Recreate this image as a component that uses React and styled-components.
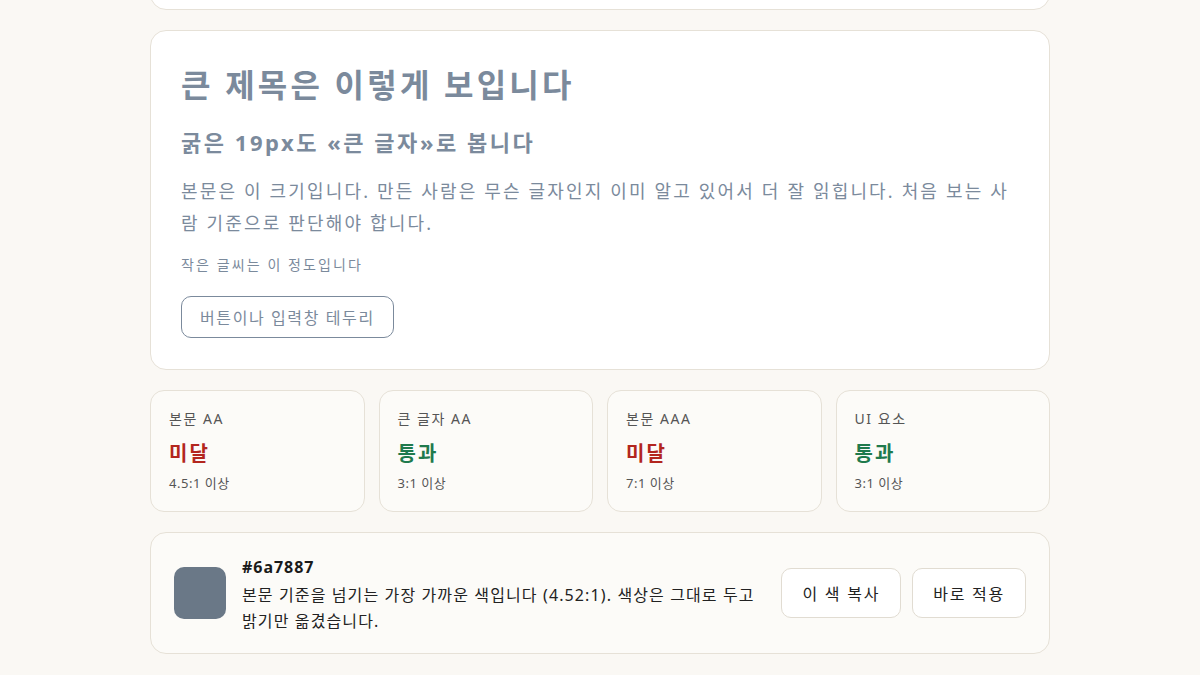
import React from 'react';
import styled, { createGlobalStyle } from 'styled-components';

const GlobalStyle = createGlobalStyle`
  html, body {
    margin: 0;
    padding: 0;
    background: #faf8f4;
    font-family: "Noto Sans", "Noto Sans CJK KR", sans-serif;
    overflow: hidden;
  }
  * { box-sizing: border-box; }
`;

const Page = styled.div`
  width: 900px;
  margin: -50px auto 0;
  display: flex;
  flex-direction: column;
  gap: 20px;
`;

const Card = styled.section`
  background: ${({ bg }) => bg || '#fff'};
  border: 1px solid #e6e1d7;
  border-radius: 16px;
`;

const TopCard = styled(Card)`
  height: 60px;
`;

const Preview = styled(Card)`
  padding: 30px 30px 31px;
  color: #7b8a9c;
`;

const Title = styled.h1`
  margin: 0;
  font-size: 32px;
  line-height: 48px;
  font-weight: 700;
  letter-spacing: 0.1em;
`;

const Subtitle = styled.h2`
  margin: 18px 0 0;
  font-size: 22px;
  line-height: 1.4;
  font-weight: 700;
  letter-spacing: 0.115em;
`;

const Body = styled.p`
  margin: 17px 0 0;
  font-size: 18px;
  line-height: 1.8;
  letter-spacing: 0.12em;
`;

const Small = styled.p`
  margin: 14px 0 0;
  font-size: 14px;
  line-height: 1.5;
  letter-spacing: 0.15em;
`;

const OutlineButton = styled.button`
  margin-top: 21px;
  height: 42px;
  padding: 0 18px;
  border: 1.5px solid #7b8a9c;
  border-radius: 10px;
  background: transparent;
  color: #7b8a9c;
  font: inherit;
  font-size: 16px;
  letter-spacing: 0.1em;
`;

const StatGrid = styled.div`
  display: grid;
  grid-template-columns: repeat(4, 1fr);
  gap: 14px;
`;

const Stat = styled(Card)`
  padding: 18px 18px 19px;
  border-radius: 14px;
`;

const StatLabel = styled.div`
  font-size: 14px;
  line-height: 1.4;
  color: #555;
  letter-spacing: 0.11em;
`;

const StatValue = styled.div`
  margin-top: 12px;
  font-size: 20px;
  line-height: 1.4;
  font-weight: 700;
  letter-spacing: 0.1em;
  color: ${({ pass }) => (pass ? '#1f7a4d' : '#b3261e')};
`;

const StatNote = styled.div`
  margin-top: 6px;
  font-size: 13px;
  line-height: 1.4;
  color: #555;
  letter-spacing: 0.04em;
`;

const Suggestion = styled(Card)`
  display: flex;
  align-items: center;
  gap: 16px;
  padding: 19px 23px;
`;

const Swatch = styled.div`
  flex: none;
  width: 52px;
  height: 52px;
  border-radius: 10px;
  background: ${({ color }) => color};
`;

const SuggestText = styled.div`
  flex: 1;
  padding-top: 4px;
`;

const Hex = styled.div`
  font-size: 16px;
  line-height: 1.4;
  font-weight: 700;
  color: #1a1a1a;
  letter-spacing: 0.06em;
`;

const Desc = styled.div`
  margin-top: 3px;
  font-size: 16px;
  line-height: 26px;
  color: #222;
  letter-spacing: 0.07em;
`;

const Actions = styled.div`
  display: flex;
  gap: 11px;
  flex: none;
`;

const ActionButton = styled.button`
  height: 50px;
  padding: 0 20px;
  border: 1px solid #e1dcd2;
  border-radius: 10px;
  background: #fff;
  color: #222;
  font: inherit;
  font-size: 16px;
  letter-spacing: 0.11em;
`;

const stats = [
  { label: '본문 AA', pass: false, note: '4.5:1 이상' },
  { label: '큰 글자 AA', pass: true, note: '3:1 이상' },
  { label: '본문 AAA', pass: false, note: '7:1 이상' },
  { label: 'UI 요소', pass: true, note: '3:1 이상' },
];

export default function App() {
  return (
    <>
      <GlobalStyle />
      <Page>
        <TopCard />
        <Preview>
          <Title>큰 제목은 이렇게 보입니다</Title>
          <Subtitle>굵은 19px도 «큰 글자»로 봅니다</Subtitle>
          <Body>
            본문은 이 크기입니다. 만든 사람은 무슨 글자인지 이미 알고 있어서 더 잘 읽힙니다. 처음 보는 사람 기준으로 판단해야 합니다.
          </Body>
          <Small>작은 글씨는 이 정도입니다</Small>
          <OutlineButton>버튼이나 입력창 테두리</OutlineButton>
        </Preview>
        <StatGrid>
          {stats.map((s) => (
            <Stat key={s.label} bg="#fcfbf8">
              <StatLabel>{s.label}</StatLabel>
              <StatValue pass={s.pass}>{s.pass ? '통과' : '미달'}</StatValue>
              <StatNote>{s.note}</StatNote>
            </Stat>
          ))}
        </StatGrid>
        <Suggestion bg="#fcfbf8">
          <Swatch color="#6a7887" />
          <SuggestText>
            <Hex>#6a7887</Hex>
            <Desc>본문 기준을 넘기는 가장 가까운 색입니다 (4.52:1). 색상은 그대로 두고 밝기만 옮겼습니다.</Desc>
          </SuggestText>
          <Actions>
            <ActionButton>이 색 복사</ActionButton>
            <ActionButton>바로 적용</ActionButton>
          </Actions>
        </Suggestion>
      </Page>
    </>
  );
}
